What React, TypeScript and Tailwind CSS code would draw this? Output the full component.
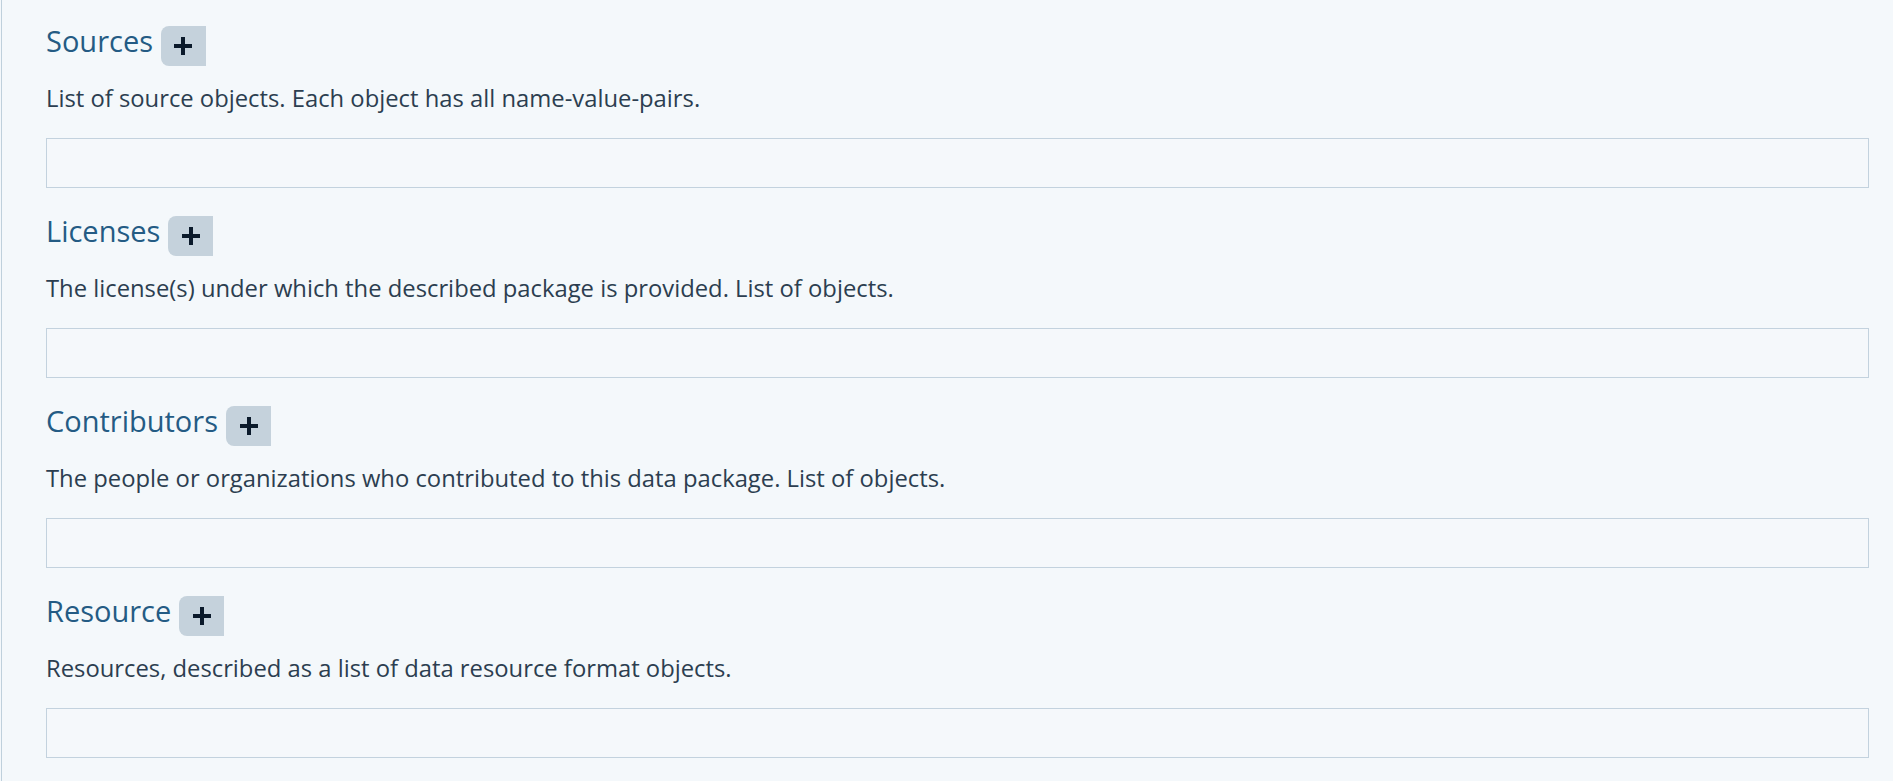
import React from 'react';

const sections = [
  {
    title: 'Sources',
    description: 'List of source objects. Each object has all name-value-pairs.',
  },
  {
    title: 'Licenses',
    description: 'The license(s) under which the described package is provided. List of objects.',
  },
  {
    title: 'Contributors',
    description: 'The people or organizations who contributed to this data package. List of objects.',
  },
  {
    title: 'Resource',
    description: 'Resources, described as a list of data resource format objects.',
  },
];

const PlusIcon = () => (
  <svg width="20" height="20" viewBox="0 0 20 20" fill="none">
    <path d="M10 1v18M1 10h18" stroke="#0b1a2b" strokeWidth="4" />
  </svg>
);

const App = () => {
  return (
    <div className="min-h-screen bg-[#f4f8fb] pl-px" style={{ fontFamily: '"Open Sans", "Noto Sans", sans-serif' }}>
      <div className="min-h-screen border-l border-[#bfd0dc] pl-[44px] pr-[24px] pt-[23px]">
        {sections.map((section, i) => (
          <div key={section.title} className={i === 0 ? '' : 'mt-[25px]'}>
            {/* Heading with add button */}
            <div className="flex items-start">
              <h3 className="text-[29px] leading-[36px] text-[#245b84]">{section.title}</h3>
              <button
                type="button"
                className="ml-[8px] mt-[3px] flex h-[40px] w-[45px] items-center justify-center rounded-l-[8px] bg-[#c5d2dc]"
              >
                <PlusIcon />
              </button>
            </div>

            <p className="mt-[16px] text-[23.8px] leading-[32px] text-[#2c3e50]">{section.description}</p>

            <div className="mt-[24px] h-[50px] border border-[#c3d2de] bg-[#f5f8fb]" />
          </div>
        ))}
      </div>
    </div>
  );
};

export default App;
